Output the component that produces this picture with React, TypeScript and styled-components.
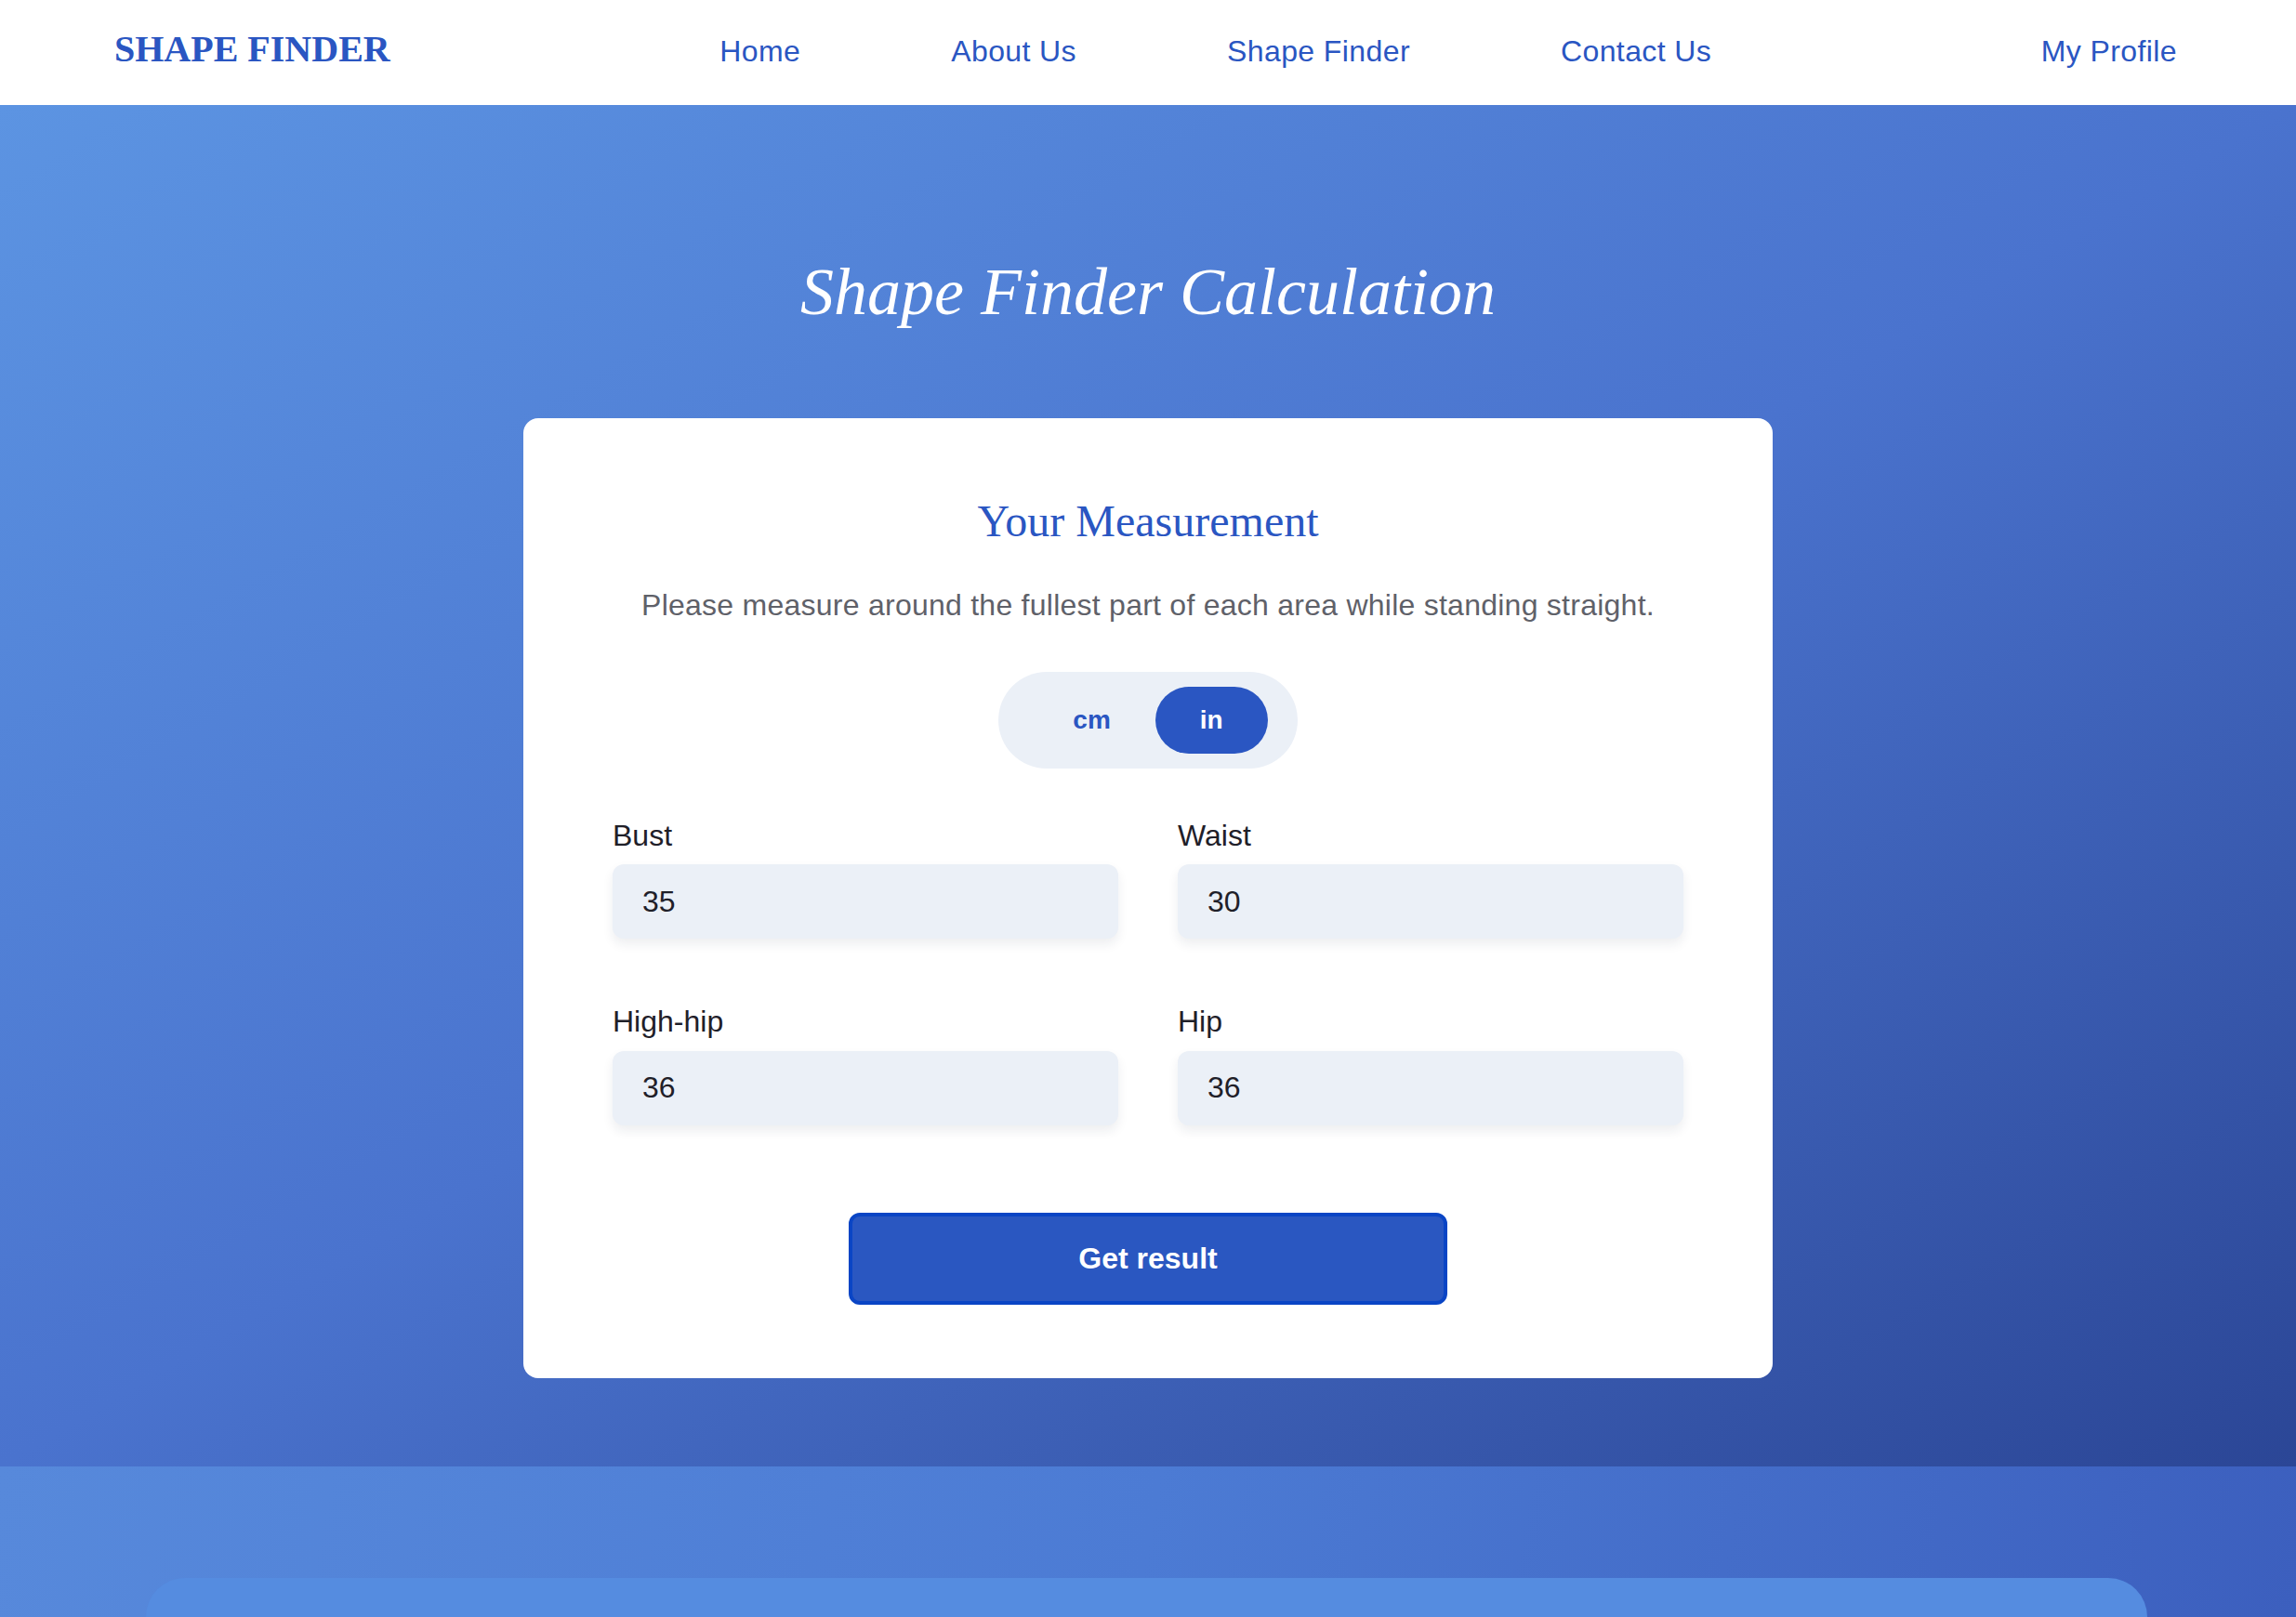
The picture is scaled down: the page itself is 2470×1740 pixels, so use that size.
import React, { useState } from "react";
import styled, { createGlobalStyle } from "styled-components";

const GlobalStyle = createGlobalStyle`
  * { box-sizing: border-box; }
  html, body { margin: 0; padding: 0; }
  body {
    font-family: "Liberation Sans", Arial, sans-serif;
    background: #ffffff;
  }
`;

const BLUE = "#2a56c2";

const Header = styled.header`
  height: 113px;
  display: flex;
  justify-content: space-between;
  align-items: baseline;
  padding: 33px 128px 0 123px;
  background: #ffffff;
`;

const Logo = styled.a`
  font-family: "Liberation Serif", "Times New Roman", serif;
  font-weight: 700;
  font-size: 40px;
  line-height: 1;
  color: ${BLUE};
  text-decoration: none;
`;

const Nav = styled.nav`
  display: flex;
  gap: 162px;
`;

const NavLink = styled.a`
  font-size: 32px;
  line-height: 1;
  letter-spacing: 0.4px;
  color: ${BLUE};
  text-decoration: none;
`;

const Hero = styled.section`
  background: linear-gradient(to bottom right, #5c94e2 0%, #4a73ce 50%, #2b4696 100%);
  padding: 165px 0 95px;
  display: flex;
  flex-direction: column;
  align-items: center;
`;

const Title = styled.h1`
  margin: 0 0 100px;
  font-family: "Liberation Serif", "Times New Roman", serif;
  font-style: italic;
  font-weight: 400;
  font-size: 72px;
  line-height: 1;
  color: #ffffff;
`;

const Card = styled.div`
  width: 1344px;
  background: #ffffff;
  border-radius: 16px;
  padding: 83px 96px 79px;
`;

const CardHeading = styled.h2`
  margin: 0;
  text-align: center;
  font-family: "Liberation Serif", "Times New Roman", serif;
  font-weight: 400;
  font-size: 48px;
  line-height: 56px;
  color: ${BLUE};
`;

const Subtitle = styled.p`
  margin: 38px 0 0;
  text-align: center;
  font-size: 32px;
  line-height: 48px;
  letter-spacing: 0.25px;
  color: #5f6169;
`;

const ToggleRow = styled.div`
  display: flex;
  justify-content: center;
  margin-top: 48px;
`;

const Toggle = styled.div`
  display: inline-flex;
  padding: 16px 32px;
  background: #ebf0f7;
  border-radius: 999px;
`;

const ToggleButton = styled.button<{ $active: boolean }>`
  height: 72px;
  padding: 0 48px;
  border: none;
  border-radius: 999px;
  font-family: inherit;
  font-weight: 700;
  font-size: 28px;
  cursor: pointer;
  color: ${(p) => (p.$active ? "#ffffff" : BLUE)};
  background: ${(p) => (p.$active ? BLUE : "transparent")};
`;

const Grid = styled.div`
  margin-top: 53px;
  display: grid;
  grid-template-columns: 1fr 1fr;
  column-gap: 64px;
  row-gap: 70px;
`;

const Field = styled.label`
  display: flex;
  flex-direction: column;
  gap: 12px;
`;

const FieldLabel = styled.span`
  font-size: 32px;
  line-height: 1.2;
  font-weight: 500;
  color: #1f2029;
`;

const Input = styled.input`
  height: 80px;
  width: 100%;
  border: none;
  outline: none;
  border-radius: 12px;
  background: #ebf0f7;
  padding: 0 32px;
  font-family: inherit;
  font-size: 32px;
  color: #1f2029;
  box-shadow: 0 6px 12px rgba(30, 40, 70, 0.08);
`;

const SubmitButton = styled.button`
  display: block;
  margin: 94px auto 0;
  width: 644px;
  height: 99px;
  border: 4px solid #0a45c5;
  border-radius: 12px;
  background: #2a57c1;
  color: #ffffff;
  font-family: inherit;
  font-weight: 700;
  font-size: 32px;
  cursor: pointer;
`;

const Lower = styled.section`
  background: linear-gradient(100deg, #5789db 0%, #4c7bd4 50%, #3c5fbe 100%);
  padding: 120px 160px 0 157px;
`;

const LowerCard = styled.div`
  height: 42px;
  background: #558ce0;
  border-radius: 48px 48px 0 0;
`;

const fields = [
  { label: "Bust", value: "35" },
  { label: "Waist", value: "30" },
  { label: "High-hip", value: "36" },
  { label: "Hip", value: "36" },
];

export default function App() {
  const [unit, setUnit] = useState<"cm" | "in">("in");
  return (
    <>
      <GlobalStyle />
      <Header>
        <Logo href="#">SHAPE FINDER</Logo>
        <Nav>
          <NavLink href="#">Home</NavLink>
          <NavLink href="#">About Us</NavLink>
          <NavLink href="#">Shape Finder</NavLink>
          <NavLink href="#">Contact Us</NavLink>
        </Nav>
        <NavLink href="#">My Profile</NavLink>
      </Header>
      <Hero>
        <Title>Shape Finder Calculation</Title>
        <Card>
          <CardHeading>Your Measurement</CardHeading>
          <Subtitle>Please measure around the fullest part of each area while standing straight.</Subtitle>
          <ToggleRow>
            <Toggle>
              <ToggleButton $active={unit === "cm"} onClick={() => setUnit("cm")}>cm</ToggleButton>
              <ToggleButton $active={unit === "in"} onClick={() => setUnit("in")}>in</ToggleButton>
            </Toggle>
          </ToggleRow>
          <Grid>
            {fields.map((f) => (
              <Field key={f.label}>
                <FieldLabel>{f.label}</FieldLabel>
                <Input type="text" defaultValue={f.value} />
              </Field>
            ))}
          </Grid>
          <SubmitButton>Get result</SubmitButton>
        </Card>
      </Hero>
      <Lower>
        <LowerCard />
      </Lower>
    </>
  );
}
